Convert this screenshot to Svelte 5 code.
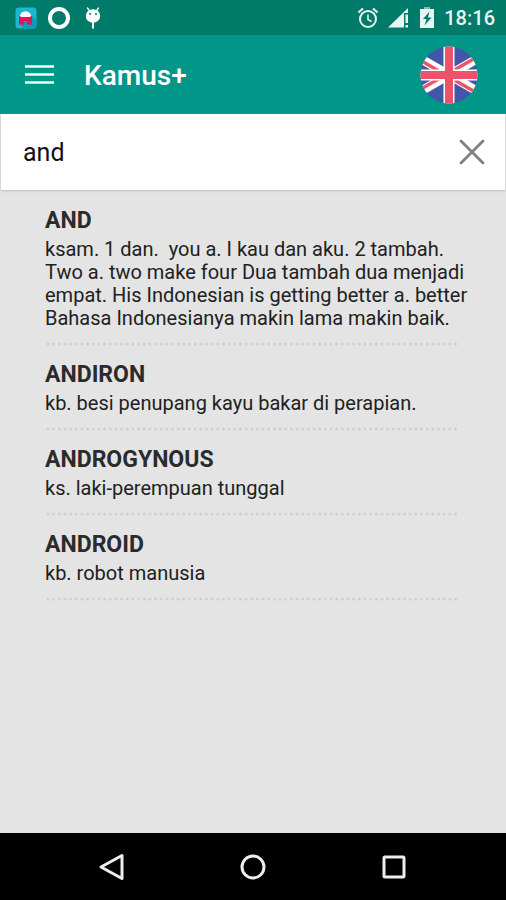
<script>
  let query = $state('and');

  const entries = [
    {
      word: 'AND',
      meaning:
        'ksam. 1 dan.  you a. I kau dan aku. 2 tambah. Two a. two make four Dua tambah dua menjadi empat. His Indonesian is getting better a. better Bahasa Indonesianya makin lama makin baik.'
    },
    { word: 'ANDIRON', meaning: 'kb. besi penupang kayu bakar di perapian.' },
    { word: 'ANDROGYNOUS', meaning: 'ks. laki-perempuan tunggal' },
    { word: 'ANDROID', meaning: 'kb. robot manusia' }
  ];
</script>

<div class="screen">
  <div class="status">
    <div class="notifications">
      <svg width="22" height="22" viewBox="0 0 22 22" aria-hidden="true">
        <rect x="0.5" y="0.5" width="21" height="21" rx="3" fill="#1cb6cf" />
        <path d="M17 9l4.500 4.500V19q0 2.500-2.500 2.500H9L5 17z" fill="#1299b4" />
        <path d="M5 9.500C5 6 7.500 4.500 10.500 4.500S16 6 16 9.500z" fill="#fff" />
        <path d="M4 9h13v8.500h-5v-3.500h-3v3.500H4z" fill="#e8125c" />
        <path d="M5.500 9.200h10" stroke="#fff" stroke-width="1.500" />
      </svg>
      <svg width="24" height="24" viewBox="0 0 24 24" aria-hidden="true">
        <circle cx="12" cy="12" r="9" fill="none" stroke="#fff" stroke-width="4" />
      </svg>
      <svg width="24" height="24" viewBox="0 0 24 24" aria-hidden="true">
        <path d="M6.500 2l2.500 3.500M17.500 2L15 5.500" stroke="#fff" stroke-width="1.400" stroke-linecap="round" />
        <ellipse cx="12" cy="10" rx="7.200" ry="6.800" fill="#fff" />
        <path d="M12 16v6.500" stroke="#fff" stroke-width="2" />
        <circle cx="9" cy="8" r="1" fill="#007a69" />
        <circle cx="15" cy="8" r="1" fill="#007a69" />
      </svg>
    </div>
    <div class="system">
      <svg width="22" height="22" viewBox="0 0 22 22" fill="none" stroke="#e9f5f3" aria-hidden="true">
        <circle cx="11" cy="12" r="8" stroke-width="2" />
        <path d="M11 7.500v5l3.500 2" stroke-width="1.600" />
        <path d="M1.500 5.500l4.500-4M20.500 5.500l-4.500-4" stroke-width="2.200" />
      </svg>
      <svg width="22" height="22" viewBox="0 0 22 22" fill="#e9f5f3" aria-hidden="true">
        <path d="M0 20.500L20 1v5h-4v14.500z" />
        <path d="M17.500 7.500H20V16h-2.500zM17.500 18H20v2.500h-2.500z" />
      </svg>
      <svg width="16" height="22" viewBox="0 0 16 22" aria-hidden="true">
        <path d="M5 0h6v2H5z" fill="#7fbdb4" />
        <path d="M1 2h14v19H1z" fill="#e9f5f3" />
        <path d="M10.500 4.500L4 12h3.500L5.500 18.500l7-8H9z" fill="#007a69" />
      </svg>
      <time>18:16</time>
    </div>
  </div>

  <header>
    <button class="menu" aria-label="Menu">
      <svg width="30" height="20" viewBox="0 0 30 20" aria-hidden="true">
        <path d="M1 1.500h29M1 9.500h29M1 17.500h29" stroke="#e9fbf8" stroke-width="2.600" />
      </svg>
    </button>
    <h1>Kamus+</h1>
    <button class="language" aria-label="English">
      <svg width="58" height="58" viewBox="0 0 58 58" aria-hidden="true">
        <defs>
          <clipPath id="disc"><circle cx="29" cy="29" r="28.500" /></clipPath>
        </defs>
        <g clip-path="url(#disc)">
          <path d="M0 0h58v58H0z" fill="#4356a9" />
          <path d="M1 13l56 32M57 13L1 45" stroke="#fff" stroke-width="9" />
          <path d="M0 14l29 17M57 11L29 27M29 31l28 16M1 43l28-16" stroke="#eb5468" stroke-width="3.500" />
          <path d="M29 0v58M0 29h58" stroke="#fff" stroke-width="11" />
          <path d="M29 0v58M0 29h58" stroke="#eb5468" stroke-width="8" />
        </g>
      </svg>
    </button>
  </header>

  <form class="search" onsubmit={(e) => e.preventDefault()}>
    <input type="text" aria-label="Search word" bind:value={query} />
    <button type="button" aria-label="Clear" onclick={() => (query = '')}>
      <svg width="28" height="28" viewBox="0 0 28 28" aria-hidden="true">
        <path d="M3 3l22 22M25 3L3 25" stroke="#808080" stroke-width="2.800" stroke-linecap="round" />
      </svg>
    </button>
  </form>

  <main>
    {#each entries as entry}
      <article>
        <h2>{entry.word}</h2>
        <p>{entry.meaning}</p>
        <svg class="dots" width="100%" height="4" aria-hidden="true">
          <line x1="3" y1="2" x2="100%" y2="2" stroke="#d0d0d0" stroke-width="3" stroke-linecap="round" stroke-dasharray="0 5.660" />
        </svg>
      </article>
    {/each}
  </main>

  <nav>
    <button aria-label="Back">
      <svg width="28" height="28" viewBox="0 0 28 28" aria-hidden="true">
        <path d="M24 2.500v23L3 14z" />
      </svg>
    </button>
    <button aria-label="Home">
      <svg width="28" height="28" viewBox="0 0 28 28" aria-hidden="true">
        <circle cx="14" cy="14" r="11" />
      </svg>
    </button>
    <button aria-label="Recent apps">
      <svg width="28" height="28" viewBox="0 0 28 28" aria-hidden="true">
        <rect x="4" y="4" width="20" height="20" rx="1" />
      </svg>
    </button>
  </nav>
</div>

<style>
  :global(body) {
    margin: 0;
  }
  .screen {
    display: flex;
    flex-direction: column;
    min-height: 100vh;
    background: #e4e4e4;
    font-family: Roboto, 'Liberation Sans', sans-serif;
    color: #212121;
  }
  button {
    display: flex;
    padding: 0;
    border: 0;
    background: none;
    cursor: pointer;
  }
  svg {
    display: block;
  }
  .status {
    display: flex;
    justify-content: space-between;
    align-items: center;
    height: 35px;
    padding: 0 11px 0 15px;
    background: #007a69;
  }
  .notifications,
  .system {
    display: flex;
    align-items: center;
    gap: 10px;
  }
  .system {
    gap: 9px;
  }
  time {
    color: #e9f5f3;
    font-size: 20px;
    font-weight: 500;
    line-height: 24px;
  }
  header {
    display: flex;
    align-items: center;
    height: 79px;
    padding: 0 28px 0 24px;
    background: #009788;
  }
  h1 {
    flex: 1;
    margin: 0 0 0 30px;
    padding-top: 2px;
    color: #fff;
    font-size: 28px;
    font-weight: 500;
    line-height: 36px;
  }
  .search {
    display: flex;
    align-items: center;
    height: 76px;
    margin: 0 1px;
    padding: 0 19px 0 22px;
    background: #fff;
    box-shadow: 0 1px 2px #bbb;
  }
  input {
    flex: 1;
    min-width: 0;
    padding: 2px 0 0;
    border: 0;
    outline: 0;
    background: none;
    color: #111;
    font: 400 25px/32px Roboto, 'Liberation Sans', sans-serif;
  }
  main {
    flex: 1;
    padding: 2px 45px 0;
  }
  article {
    padding-top: 14px;
  }
  h2 {
    margin: 0 0 2px;
    color: #2b2b2b;
    font-size: 23px;
    font-weight: 700;
    line-height: 30px;
  }
  p {
    margin: 0 -10px 12px 0;
    font-size: 20px;
    line-height: 23px;
    white-space: pre-wrap;
  }
  nav {
    display: flex;
    align-items: center;
    height: 67px;
    padding: 0 42px;
    background: #000;
  }
  nav button {
    flex: 1;
    justify-content: center;
  }
  nav svg {
    fill: none;
    stroke: #eee;
    stroke-width: 3;
    stroke-linejoin: round;
  }
</style>
